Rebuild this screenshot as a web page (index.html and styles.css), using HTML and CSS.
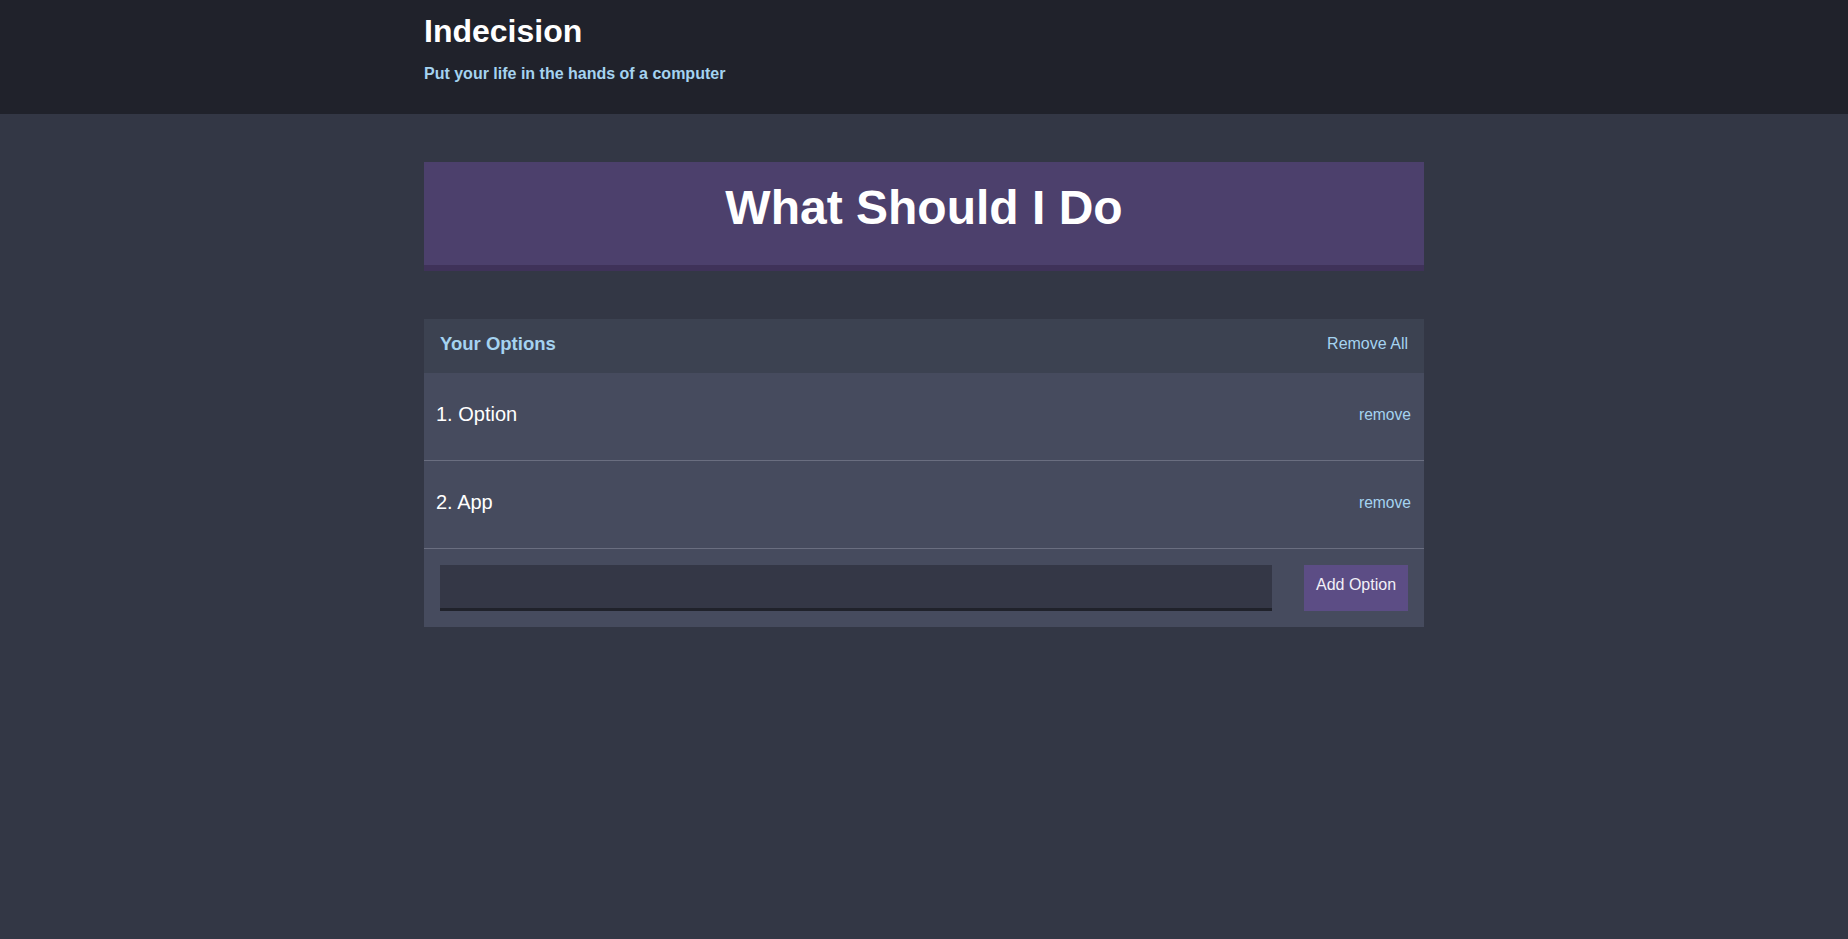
FILE: index.html
```html
<!DOCTYPE html>
<html lang="en">
<head>
<meta charset="utf-8">
<title>Indecision</title>
<link rel="stylesheet" href="styles.css">
</head>
<body>
<header class="header">
  <div class="container">
    <h1 class="header__title">Indecision</h1>
    <h2 class="header__subtitle">Put your life in the hands of a computer</h2>
  </div>
</header>
<main class="container">
  <button class="big-button">What Should I Do</button>
  <section class="widget">
    <div class="widget-header">
      <h3 class="widget-header__title">Your Options</h3>
      <button class="button--link">Remove All</button>
    </div>
    <div class="option">
      <p class="option__text">1. Option</p>
      <button class="button--link button--small">remove</button>
    </div>
    <div class="option">
      <p class="option__text">2. App</p>
      <button class="button--link button--small">remove</button>
    </div>
    <form class="add-option">
      <input class="add-option__input" type="text" name="option">
      <button class="button" type="button">Add Option</button>
    </form>
  </section>
</main>
</body>
</html>
```
FILE: styles.css
```css
* { box-sizing: border-box; }
html, body { margin: 0; padding: 0; }
body {
  background: #333745;
  font-family: "Liberation Sans", Arial, sans-serif;
  font-size: 16px;
  color: #fff;
}
.container {
  width: 1000px;
  margin: 0 auto;
}
.header {
  background: #20222b;
  height: 114px;
  padding-top: 13px;
}
.header__title {
  margin: 0;
  font-size: 32px;
  font-weight: bold;
  line-height: normal;
  color: #fff;
}
.header__subtitle {
  margin: 15px 0 0;
  font-size: 16px;
  font-weight: bold;
  line-height: normal;
  color: #a5d3f0;
}
.big-button {
  display: block;
  width: 100%;
  margin: 48px 0;
  padding: 18px 0 30px;
  background: #4c406c;
  border: none;
  border-bottom: 6px solid #3f3259;
  color: #fff;
  font-family: inherit;
  font-size: 48px;
  font-weight: bold;
  line-height: normal;
  text-align: center;
}
.widget {
  background: #464b5e;
}
.widget-header {
  display: flex;
  justify-content: space-between;
  align-items: center;
  height: 54px;
  padding: 14px 16px 18px;
  background: #3c4251;
}
.widget-header__title {
  margin: 0;
  font-size: 18.5px;
  font-weight: bold;
  line-height: normal;
  color: #a5d3f0;
}
.button--link {
  background: none;
  border: none;
  padding: 0;
  font-family: inherit;
  font-size: 16px;
  line-height: normal;
  color: #a5d3f0;
}
.button--small {
  font-size: 15.6px;
}
.option {
  display: flex;
  justify-content: space-between;
  align-items: center;
  padding: 30px 13px 34px 12px;
  border-bottom: 1px solid #6a6e80;
}
.option__text {
  margin: 0;
  font-size: 20px;
  line-height: normal;
  color: #fff;
}
.add-option {
  display: flex;
  gap: 32px;
  padding: 16px;
  margin: 0;
}
.add-option__input {
  flex: 1;
  height: 46px;
  background: #343746;
  border: none;
  border-bottom: 3px solid #20222b;
  color: #a5d3f0;
  font-family: inherit;
  font-size: 16px;
  padding: 12px;
  outline: none;
}
.button {
  display: block;
  height: 46px;
  width: 104px;
  padding: 0 0 7px;
  background: #5c4d85;
  border: none;
  color: #f2f0f8;
  font-family: inherit;
  font-size: 16px;
  line-height: normal;
  text-align: center;
}
```
